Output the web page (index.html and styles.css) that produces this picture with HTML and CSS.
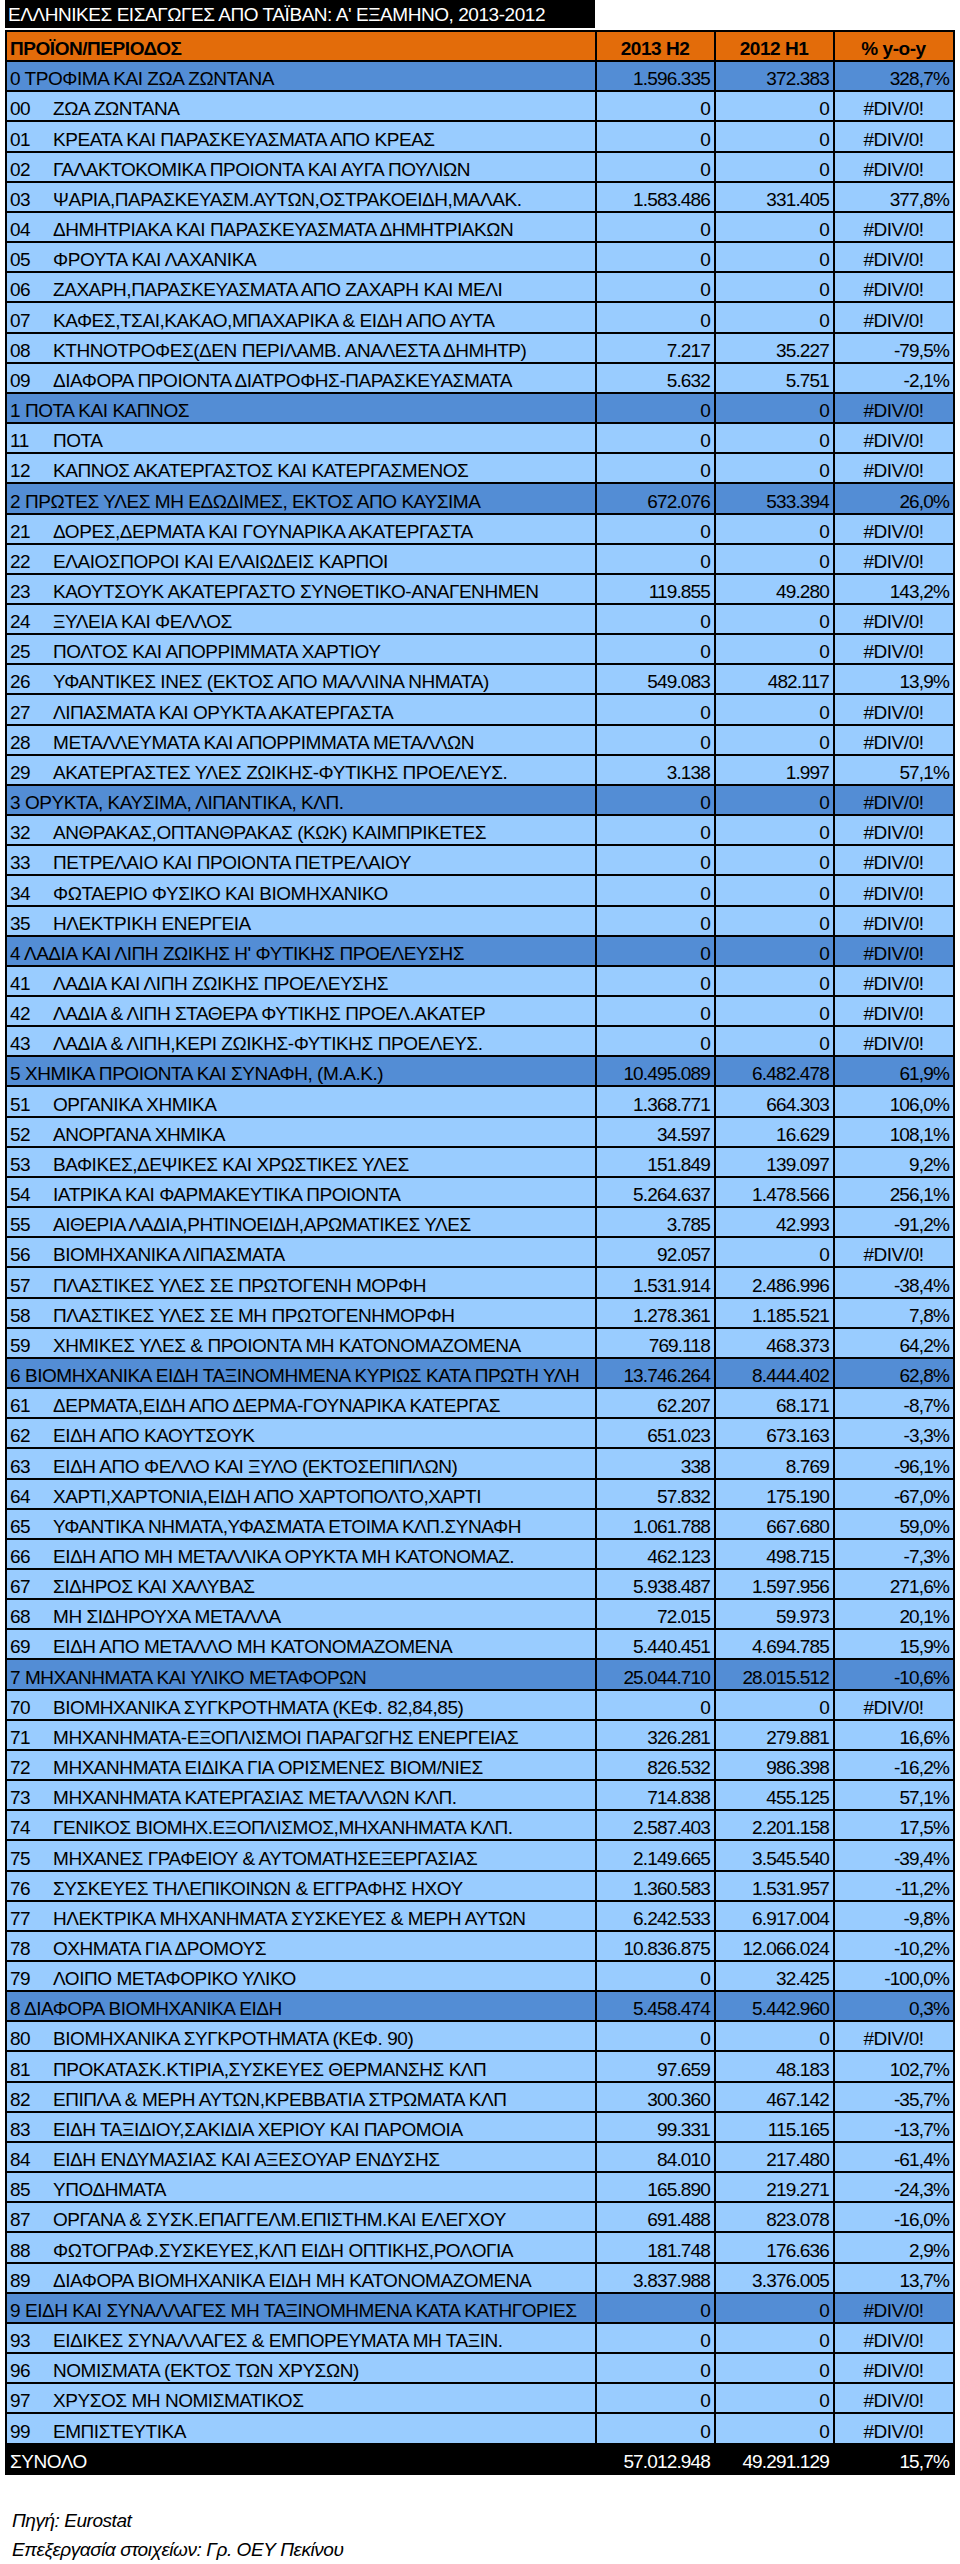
FILE: index.html
```html
<!DOCTYPE html>
<html lang="el">
<head>
<meta charset="utf-8">
<title>ΕΛΛΗΝΙΚΕΣ ΕΙΣΑΓΩΓΕΣ ΑΠΟ ΤΑΪΒΑΝ</title>
<link rel="stylesheet" href="styles.css">
</head>
<body>
<div class="page">
  <div class="title">ΕΛΛΗΝΙΚΕΣ ΕΙΣΑΓΩΓΕΣ ΑΠΟ ΤΑΪΒΑΝ: Α' ΕΞΑΜΗΝΟ, 2013-2012</div>
  <table class="data">
    <colgroup><col class="c-name"><col class="c-num"><col class="c-num"><col class="c-pct"></colgroup>
    <tr class="head"><th class="name">ΠΡΟΪΟΝ/ΠΕΡΙΟΔΟΣ</th><th>2013 H2</th><th>2012 H1</th><th>% y-o-y</th></tr>
    <tr class="cat"><td class="name">0 ΤΡΟΦΙΜΑ ΚΑΙ ΖΩΑ ΖΩΝΤΑΝΑ</td><td class="num">1.596.335</td><td class="num">372.383</td><td class="num">328,7%</td></tr>
    <tr class="sub"><td class="name"><span class="code">00</span>ΖΩΑ ΖΩΝΤΑΝΑ</td><td class="num">0</td><td class="num">0</td><td class="err">#DIV/0!</td></tr>
    <tr class="sub"><td class="name"><span class="code">01</span>ΚΡΕΑΤΑ ΚΑΙ ΠΑΡΑΣΚΕΥΑΣΜΑΤΑ ΑΠΟ ΚΡΕΑΣ</td><td class="num">0</td><td class="num">0</td><td class="err">#DIV/0!</td></tr>
    <tr class="sub"><td class="name"><span class="code">02</span>ΓΑΛΑΚΤΟΚΟΜΙΚΑ ΠΡΟΙΟΝΤΑ ΚΑΙ ΑΥΓΑ ΠΟΥΛΙΩΝ</td><td class="num">0</td><td class="num">0</td><td class="err">#DIV/0!</td></tr>
    <tr class="sub"><td class="name"><span class="code">03</span>ΨΑΡΙΑ,ΠΑΡΑΣΚΕΥΑΣΜ.ΑΥΤΩΝ,ΟΣΤΡΑΚΟΕΙΔΗ,ΜΑΛΑΚ.</td><td class="num">1.583.486</td><td class="num">331.405</td><td class="num">377,8%</td></tr>
    <tr class="sub"><td class="name"><span class="code">04</span>ΔΗΜΗΤΡΙΑΚΑ ΚΑΙ ΠΑΡΑΣΚΕΥΑΣΜΑΤΑ ΔΗΜΗΤΡΙΑΚΩΝ</td><td class="num">0</td><td class="num">0</td><td class="err">#DIV/0!</td></tr>
    <tr class="sub"><td class="name"><span class="code">05</span>ΦΡΟΥΤΑ ΚΑΙ ΛΑΧΑΝΙΚΑ</td><td class="num">0</td><td class="num">0</td><td class="err">#DIV/0!</td></tr>
    <tr class="sub"><td class="name"><span class="code">06</span>ΖΑΧΑΡΗ,ΠΑΡΑΣΚΕΥΑΣΜΑΤΑ ΑΠΟ ΖΑΧΑΡΗ ΚΑΙ ΜΕΛΙ</td><td class="num">0</td><td class="num">0</td><td class="err">#DIV/0!</td></tr>
    <tr class="sub"><td class="name"><span class="code">07</span>ΚΑΦΕΣ,ΤΣΑΙ,ΚΑΚΑΟ,ΜΠΑΧΑΡΙΚΑ &amp; ΕΙΔΗ ΑΠΟ ΑΥΤΑ</td><td class="num">0</td><td class="num">0</td><td class="err">#DIV/0!</td></tr>
    <tr class="sub"><td class="name"><span class="code">08</span>ΚΤΗΝΟΤΡΟΦΕΣ(ΔΕΝ ΠΕΡΙΛΑΜΒ. ΑΝΑΛΕΣΤΑ ΔΗΜΗΤΡ)</td><td class="num">7.217</td><td class="num">35.227</td><td class="num">-79,5%</td></tr>
    <tr class="sub"><td class="name"><span class="code">09</span>ΔΙΑΦΟΡΑ ΠΡΟΙΟΝΤΑ ΔΙΑΤΡΟΦΗΣ-ΠΑΡΑΣΚΕΥΑΣΜΑΤΑ</td><td class="num">5.632</td><td class="num">5.751</td><td class="num">-2,1%</td></tr>
    <tr class="cat"><td class="name">1 ΠΟΤΑ ΚΑΙ ΚΑΠΝΟΣ</td><td class="num">0</td><td class="num">0</td><td class="err">#DIV/0!</td></tr>
    <tr class="sub"><td class="name"><span class="code">11</span>ΠΟΤΑ</td><td class="num">0</td><td class="num">0</td><td class="err">#DIV/0!</td></tr>
    <tr class="sub"><td class="name"><span class="code">12</span>ΚΑΠΝΟΣ ΑΚΑΤΕΡΓΑΣΤΟΣ ΚΑΙ ΚΑΤΕΡΓΑΣΜΕΝΟΣ</td><td class="num">0</td><td class="num">0</td><td class="err">#DIV/0!</td></tr>
    <tr class="cat"><td class="name">2 ΠΡΩΤΕΣ ΥΛΕΣ ΜΗ ΕΔΩΔΙΜΕΣ, ΕΚΤΟΣ ΑΠΟ ΚΑΥΣΙΜΑ</td><td class="num">672.076</td><td class="num">533.394</td><td class="num">26,0%</td></tr>
    <tr class="sub"><td class="name"><span class="code">21</span>ΔΟΡΕΣ,ΔΕΡΜΑΤΑ ΚΑΙ ΓΟΥΝΑΡΙΚΑ ΑΚΑΤΕΡΓΑΣΤΑ</td><td class="num">0</td><td class="num">0</td><td class="err">#DIV/0!</td></tr>
    <tr class="sub"><td class="name"><span class="code">22</span>ΕΛΑΙΟΣΠΟΡΟΙ ΚΑΙ ΕΛΑΙΩΔΕΙΣ ΚΑΡΠΟΙ</td><td class="num">0</td><td class="num">0</td><td class="err">#DIV/0!</td></tr>
    <tr class="sub"><td class="name"><span class="code">23</span>ΚΑΟΥΤΣΟΥΚ ΑΚΑΤΕΡΓΑΣΤΟ ΣΥΝΘΕΤΙΚΟ-ΑΝΑΓΕΝΗΜΕΝ</td><td class="num">119.855</td><td class="num">49.280</td><td class="num">143,2%</td></tr>
    <tr class="sub"><td class="name"><span class="code">24</span>ΞΥΛΕΙΑ ΚΑΙ ΦΕΛΛΟΣ</td><td class="num">0</td><td class="num">0</td><td class="err">#DIV/0!</td></tr>
    <tr class="sub"><td class="name"><span class="code">25</span>ΠΟΛΤΟΣ ΚΑΙ ΑΠΟΡΡΙΜΜΑΤΑ ΧΑΡΤΙΟΥ</td><td class="num">0</td><td class="num">0</td><td class="err">#DIV/0!</td></tr>
    <tr class="sub"><td class="name"><span class="code">26</span>ΥΦΑΝΤΙΚΕΣ ΙΝΕΣ (ΕΚΤΟΣ ΑΠΟ ΜΑΛΛΙΝΑ ΝΗΜΑΤΑ)</td><td class="num">549.083</td><td class="num">482.117</td><td class="num">13,9%</td></tr>
    <tr class="sub"><td class="name"><span class="code">27</span>ΛΙΠΑΣΜΑΤΑ ΚΑΙ ΟΡΥΚΤΑ ΑΚΑΤΕΡΓΑΣΤΑ</td><td class="num">0</td><td class="num">0</td><td class="err">#DIV/0!</td></tr>
    <tr class="sub"><td class="name"><span class="code">28</span>ΜΕΤΑΛΛΕΥΜΑΤΑ ΚΑΙ ΑΠΟΡΡΙΜΜΑΤΑ ΜΕΤΑΛΛΩΝ</td><td class="num">0</td><td class="num">0</td><td class="err">#DIV/0!</td></tr>
    <tr class="sub"><td class="name"><span class="code">29</span>ΑΚΑΤΕΡΓΑΣΤΕΣ ΥΛΕΣ ΖΩΙΚΗΣ-ΦΥΤΙΚΗΣ ΠΡΟΕΛΕΥΣ.</td><td class="num">3.138</td><td class="num">1.997</td><td class="num">57,1%</td></tr>
    <tr class="cat"><td class="name">3 ΟΡΥΚΤΑ, ΚΑΥΣΙΜΑ, ΛΙΠΑΝΤΙΚΑ, ΚΛΠ.</td><td class="num">0</td><td class="num">0</td><td class="err">#DIV/0!</td></tr>
    <tr class="sub"><td class="name"><span class="code">32</span>ΑΝΘΡΑΚΑΣ,ΟΠΤΑΝΘΡΑΚΑΣ (ΚΩΚ) ΚΑΙΜΠΡΙΚΕΤΕΣ</td><td class="num">0</td><td class="num">0</td><td class="err">#DIV/0!</td></tr>
    <tr class="sub"><td class="name"><span class="code">33</span>ΠΕΤΡΕΛΑΙΟ ΚΑΙ ΠΡΟΙΟΝΤΑ ΠΕΤΡΕΛΑΙΟΥ</td><td class="num">0</td><td class="num">0</td><td class="err">#DIV/0!</td></tr>
    <tr class="sub"><td class="name"><span class="code">34</span>ΦΩΤΑΕΡΙΟ ΦΥΣΙΚΟ ΚΑΙ ΒΙΟΜΗΧΑΝΙΚΟ</td><td class="num">0</td><td class="num">0</td><td class="err">#DIV/0!</td></tr>
    <tr class="sub"><td class="name"><span class="code">35</span>ΗΛΕΚΤΡΙΚΗ ΕΝΕΡΓΕΙΑ</td><td class="num">0</td><td class="num">0</td><td class="err">#DIV/0!</td></tr>
    <tr class="cat"><td class="name">4 ΛΑΔΙΑ ΚΑΙ ΛΙΠΗ ΖΩΙΚΗΣ Η' ΦΥΤΙΚΗΣ ΠΡΟΕΛΕΥΣΗΣ</td><td class="num">0</td><td class="num">0</td><td class="err">#DIV/0!</td></tr>
    <tr class="sub"><td class="name"><span class="code">41</span>ΛΑΔΙΑ ΚΑΙ ΛΙΠΗ ΖΩΙΚΗΣ ΠΡΟΕΛΕΥΣΗΣ</td><td class="num">0</td><td class="num">0</td><td class="err">#DIV/0!</td></tr>
    <tr class="sub"><td class="name"><span class="code">42</span>ΛΑΔΙΑ &amp; ΛΙΠΗ ΣΤΑΘΕΡΑ ΦΥΤΙΚΗΣ ΠΡΟΕΛ.ΑΚΑΤΕΡ</td><td class="num">0</td><td class="num">0</td><td class="err">#DIV/0!</td></tr>
    <tr class="sub"><td class="name"><span class="code">43</span>ΛΑΔΙΑ &amp; ΛΙΠΗ,ΚΕΡΙ ΖΩΙΚΗΣ-ΦΥΤΙΚΗΣ ΠΡΟΕΛΕΥΣ.</td><td class="num">0</td><td class="num">0</td><td class="err">#DIV/0!</td></tr>
    <tr class="cat"><td class="name">5 ΧΗΜΙΚΑ ΠΡΟΙΟΝΤΑ ΚΑΙ ΣΥΝΑΦΗ, (Μ.Α.Κ.)</td><td class="num">10.495.089</td><td class="num">6.482.478</td><td class="num">61,9%</td></tr>
    <tr class="sub"><td class="name"><span class="code">51</span>ΟΡΓΑΝΙΚΑ ΧΗΜΙΚΑ</td><td class="num">1.368.771</td><td class="num">664.303</td><td class="num">106,0%</td></tr>
    <tr class="sub"><td class="name"><span class="code">52</span>ΑΝΟΡΓΑΝΑ ΧΗΜΙΚΑ</td><td class="num">34.597</td><td class="num">16.629</td><td class="num">108,1%</td></tr>
    <tr class="sub"><td class="name"><span class="code">53</span>ΒΑΦΙΚΕΣ,ΔΕΨΙΚΕΣ ΚΑΙ ΧΡΩΣΤΙΚΕΣ ΥΛΕΣ</td><td class="num">151.849</td><td class="num">139.097</td><td class="num">9,2%</td></tr>
    <tr class="sub"><td class="name"><span class="code">54</span>ΙΑΤΡΙΚΑ ΚΑΙ ΦΑΡΜΑΚΕΥΤΙΚΑ ΠΡΟΙΟΝΤΑ</td><td class="num">5.264.637</td><td class="num">1.478.566</td><td class="num">256,1%</td></tr>
    <tr class="sub"><td class="name"><span class="code">55</span>ΑΙΘΕΡΙΑ ΛΑΔΙΑ,ΡΗΤΙΝΟΕΙΔΗ,ΑΡΩΜΑΤΙΚΕΣ ΥΛΕΣ</td><td class="num">3.785</td><td class="num">42.993</td><td class="num">-91,2%</td></tr>
    <tr class="sub"><td class="name"><span class="code">56</span>ΒΙΟΜΗΧΑΝΙΚΑ ΛΙΠΑΣΜΑΤΑ</td><td class="num">92.057</td><td class="num">0</td><td class="err">#DIV/0!</td></tr>
    <tr class="sub"><td class="name"><span class="code">57</span>ΠΛΑΣΤΙΚΕΣ ΥΛΕΣ ΣΕ ΠΡΩΤΟΓΕΝΗ ΜΟΡΦΗ</td><td class="num">1.531.914</td><td class="num">2.486.996</td><td class="num">-38,4%</td></tr>
    <tr class="sub"><td class="name"><span class="code">58</span>ΠΛΑΣΤΙΚΕΣ ΥΛΕΣ ΣΕ ΜΗ ΠΡΩΤΟΓΕΝΗΜΟΡΦΗ</td><td class="num">1.278.361</td><td class="num">1.185.521</td><td class="num">7,8%</td></tr>
    <tr class="sub"><td class="name"><span class="code">59</span>ΧΗΜΙΚΕΣ ΥΛΕΣ &amp; ΠΡΟΙΟΝΤΑ ΜΗ ΚΑΤΟΝΟΜΑΖΟΜΕΝΑ</td><td class="num">769.118</td><td class="num">468.373</td><td class="num">64,2%</td></tr>
    <tr class="cat"><td class="name">6 ΒΙΟΜΗΧΑΝΙΚΑ ΕΙΔΗ ΤΑΞΙΝΟΜΗΜΕΝΑ ΚΥΡΙΩΣ ΚΑΤΑ ΠΡΩΤΗ ΥΛΗ</td><td class="num">13.746.264</td><td class="num">8.444.402</td><td class="num">62,8%</td></tr>
    <tr class="sub"><td class="name"><span class="code">61</span>ΔΕΡΜΑΤΑ,ΕΙΔΗ ΑΠΟ ΔΕΡΜΑ-ΓΟΥΝΑΡΙΚΑ ΚΑΤΕΡΓΑΣ</td><td class="num">62.207</td><td class="num">68.171</td><td class="num">-8,7%</td></tr>
    <tr class="sub"><td class="name"><span class="code">62</span>ΕΙΔΗ ΑΠΟ ΚΑΟΥΤΣΟΥΚ</td><td class="num">651.023</td><td class="num">673.163</td><td class="num">-3,3%</td></tr>
    <tr class="sub"><td class="name"><span class="code">63</span>ΕΙΔΗ ΑΠΟ ΦΕΛΛΟ ΚΑΙ ΞΥΛΟ (ΕΚΤΟΣΕΠΙΠΛΩΝ)</td><td class="num">338</td><td class="num">8.769</td><td class="num">-96,1%</td></tr>
    <tr class="sub"><td class="name"><span class="code">64</span>ΧΑΡΤΙ,ΧΑΡΤΟΝΙΑ,ΕΙΔΗ ΑΠΟ ΧΑΡΤΟΠΟΛΤΟ,ΧΑΡΤΙ</td><td class="num">57.832</td><td class="num">175.190</td><td class="num">-67,0%</td></tr>
    <tr class="sub"><td class="name"><span class="code">65</span>ΥΦΑΝΤΙΚΑ ΝΗΜΑΤΑ,ΥΦΑΣΜΑΤΑ ΕΤΟΙΜΑ ΚΛΠ.ΣΥΝΑΦΗ</td><td class="num">1.061.788</td><td class="num">667.680</td><td class="num">59,0%</td></tr>
    <tr class="sub"><td class="name"><span class="code">66</span>ΕΙΔΗ ΑΠΟ ΜΗ ΜΕΤΑΛΛΙΚΑ ΟΡΥΚΤΑ ΜΗ ΚΑΤΟΝΟΜΑΖ.</td><td class="num">462.123</td><td class="num">498.715</td><td class="num">-7,3%</td></tr>
    <tr class="sub"><td class="name"><span class="code">67</span>ΣΙΔΗΡΟΣ ΚΑΙ ΧΑΛΥΒΑΣ</td><td class="num">5.938.487</td><td class="num">1.597.956</td><td class="num">271,6%</td></tr>
    <tr class="sub"><td class="name"><span class="code">68</span>ΜΗ ΣΙΔΗΡΟΥΧΑ ΜΕΤΑΛΛΑ</td><td class="num">72.015</td><td class="num">59.973</td><td class="num">20,1%</td></tr>
    <tr class="sub"><td class="name"><span class="code">69</span>ΕΙΔΗ ΑΠΟ ΜΕΤΑΛΛΟ ΜΗ ΚΑΤΟΝΟΜΑΖΟΜΕΝΑ</td><td class="num">5.440.451</td><td class="num">4.694.785</td><td class="num">15,9%</td></tr>
    <tr class="cat"><td class="name">7 ΜΗΧΑΝΗΜΑΤΑ ΚΑΙ ΥΛΙΚΟ ΜΕΤΑΦΟΡΩΝ</td><td class="num">25.044.710</td><td class="num">28.015.512</td><td class="num">-10,6%</td></tr>
    <tr class="sub"><td class="name"><span class="code">70</span>ΒΙΟΜΗΧΑΝΙΚΑ ΣΥΓΚΡΟΤΗΜΑΤΑ (ΚΕΦ. 82,84,85)</td><td class="num">0</td><td class="num">0</td><td class="err">#DIV/0!</td></tr>
    <tr class="sub"><td class="name"><span class="code">71</span>ΜΗΧΑΝΗΜΑΤΑ-ΕΞΟΠΛΙΣΜΟΙ ΠΑΡΑΓΩΓΗΣ ΕΝΕΡΓΕΙΑΣ</td><td class="num">326.281</td><td class="num">279.881</td><td class="num">16,6%</td></tr>
    <tr class="sub"><td class="name"><span class="code">72</span>ΜΗΧΑΝΗΜΑΤΑ ΕΙΔΙΚΑ ΓΙΑ ΟΡΙΣΜΕΝΕΣ ΒΙΟΜ/ΝΙΕΣ</td><td class="num">826.532</td><td class="num">986.398</td><td class="num">-16,2%</td></tr>
    <tr class="sub"><td class="name"><span class="code">73</span>ΜΗΧΑΝΗΜΑΤΑ ΚΑΤΕΡΓΑΣΙΑΣ ΜΕΤΑΛΛΩΝ ΚΛΠ.</td><td class="num">714.838</td><td class="num">455.125</td><td class="num">57,1%</td></tr>
    <tr class="sub"><td class="name"><span class="code">74</span>ΓΕΝΙΚΟΣ ΒΙΟΜΗΧ.ΕΞΟΠΛΙΣΜΟΣ,ΜΗΧΑΝΗΜΑΤΑ ΚΛΠ.</td><td class="num">2.587.403</td><td class="num">2.201.158</td><td class="num">17,5%</td></tr>
    <tr class="sub"><td class="name"><span class="code">75</span>ΜΗΧΑΝΕΣ ΓΡΑΦΕΙΟΥ &amp; ΑΥΤΟΜΑΤΗΣΕΞΕΡΓΑΣΙΑΣ</td><td class="num">2.149.665</td><td class="num">3.545.540</td><td class="num">-39,4%</td></tr>
    <tr class="sub"><td class="name"><span class="code">76</span>ΣΥΣΚΕΥΕΣ ΤΗΛΕΠΙΚΟΙΝΩΝ &amp; ΕΓΓΡΑΦΗΣ ΗΧΟΥ</td><td class="num">1.360.583</td><td class="num">1.531.957</td><td class="num">-11,2%</td></tr>
    <tr class="sub"><td class="name"><span class="code">77</span>ΗΛΕΚΤΡΙΚΑ ΜΗΧΑΝΗΜΑΤΑ ΣΥΣΚΕΥΕΣ &amp; ΜΕΡΗ ΑΥΤΩΝ</td><td class="num">6.242.533</td><td class="num">6.917.004</td><td class="num">-9,8%</td></tr>
    <tr class="sub"><td class="name"><span class="code">78</span>ΟΧΗΜΑΤΑ ΓΙΑ ΔΡΟΜΟΥΣ</td><td class="num">10.836.875</td><td class="num">12.066.024</td><td class="num">-10,2%</td></tr>
    <tr class="sub"><td class="name"><span class="code">79</span>ΛΟΙΠΟ ΜΕΤΑΦΟΡΙΚΟ ΥΛΙΚΟ</td><td class="num">0</td><td class="num">32.425</td><td class="num">-100,0%</td></tr>
    <tr class="cat"><td class="name">8 ΔΙΑΦΟΡΑ ΒΙΟΜΗΧΑΝΙΚΑ ΕΙΔΗ</td><td class="num">5.458.474</td><td class="num">5.442.960</td><td class="num">0,3%</td></tr>
    <tr class="sub"><td class="name"><span class="code">80</span>ΒΙΟΜΗΧΑΝΙΚΑ ΣΥΓΚΡΟΤΗΜΑΤΑ (ΚΕΦ. 90)</td><td class="num">0</td><td class="num">0</td><td class="err">#DIV/0!</td></tr>
    <tr class="sub"><td class="name"><span class="code">81</span>ΠΡΟΚΑΤΑΣΚ.ΚΤΙΡΙΑ,ΣΥΣΚΕΥΕΣ ΘΕΡΜΑΝΣΗΣ ΚΛΠ</td><td class="num">97.659</td><td class="num">48.183</td><td class="num">102,7%</td></tr>
    <tr class="sub"><td class="name"><span class="code">82</span>ΕΠΙΠΛΑ &amp; ΜΕΡΗ ΑΥΤΩΝ,ΚΡΕΒΒΑΤΙΑ ΣΤΡΩΜΑΤΑ ΚΛΠ</td><td class="num">300.360</td><td class="num">467.142</td><td class="num">-35,7%</td></tr>
    <tr class="sub"><td class="name"><span class="code">83</span>ΕΙΔΗ ΤΑΞΙΔΙΟΥ,ΣΑΚΙΔΙΑ ΧΕΡΙΟΥ ΚΑΙ ΠΑΡΟΜΟΙΑ</td><td class="num">99.331</td><td class="num">115.165</td><td class="num">-13,7%</td></tr>
    <tr class="sub"><td class="name"><span class="code">84</span>ΕΙΔΗ ΕΝΔΥΜΑΣΙΑΣ ΚΑΙ ΑΞΕΣΟΥΑΡ ΕΝΔΥΣΗΣ</td><td class="num">84.010</td><td class="num">217.480</td><td class="num">-61,4%</td></tr>
    <tr class="sub"><td class="name"><span class="code">85</span>ΥΠΟΔΗΜΑΤΑ</td><td class="num">165.890</td><td class="num">219.271</td><td class="num">-24,3%</td></tr>
    <tr class="sub"><td class="name"><span class="code">87</span>ΟΡΓΑΝΑ &amp; ΣΥΣΚ.ΕΠΑΓΓΕΛΜ.ΕΠΙΣΤΗΜ.ΚΑΙ ΕΛΕΓΧΟΥ</td><td class="num">691.488</td><td class="num">823.078</td><td class="num">-16,0%</td></tr>
    <tr class="sub"><td class="name"><span class="code">88</span>ΦΩΤΟΓΡΑΦ.ΣΥΣΚΕΥΕΣ,ΚΛΠ ΕΙΔΗ ΟΠΤΙΚΗΣ,ΡΟΛΟΓΙΑ</td><td class="num">181.748</td><td class="num">176.636</td><td class="num">2,9%</td></tr>
    <tr class="sub"><td class="name"><span class="code">89</span>ΔΙΑΦΟΡΑ ΒΙΟΜΗΧΑΝΙΚΑ ΕΙΔΗ ΜΗ ΚΑΤΟΝΟΜΑΖΟΜΕΝΑ</td><td class="num">3.837.988</td><td class="num">3.376.005</td><td class="num">13,7%</td></tr>
    <tr class="cat"><td class="name">9 ΕΙΔΗ ΚΑΙ ΣΥΝΑΛΛΑΓΕΣ ΜΗ ΤΑΞΙΝΟΜΗΜΕΝΑ ΚΑΤΑ ΚΑΤΗΓΟΡΙΕΣ</td><td class="num">0</td><td class="num">0</td><td class="err">#DIV/0!</td></tr>
    <tr class="sub"><td class="name"><span class="code">93</span>ΕΙΔΙΚΕΣ ΣΥΝΑΛΛΑΓΕΣ &amp; ΕΜΠΟΡΕΥΜΑΤΑ ΜΗ ΤΑΞΙΝ.</td><td class="num">0</td><td class="num">0</td><td class="err">#DIV/0!</td></tr>
    <tr class="sub"><td class="name"><span class="code">96</span>ΝΟΜΙΣΜΑΤΑ (ΕΚΤΟΣ ΤΩΝ ΧΡΥΣΩΝ)</td><td class="num">0</td><td class="num">0</td><td class="err">#DIV/0!</td></tr>
    <tr class="sub"><td class="name"><span class="code">97</span>ΧΡΥΣΟΣ ΜΗ ΝΟΜΙΣΜΑΤΙΚΟΣ</td><td class="num">0</td><td class="num">0</td><td class="err">#DIV/0!</td></tr>
    <tr class="sub"><td class="name"><span class="code">99</span>ΕΜΠΙΣΤΕΥΤΙΚΑ</td><td class="num">0</td><td class="num">0</td><td class="err">#DIV/0!</td></tr>
    <tr class="total"><td class="name">ΣΥΝΟΛΟ</td><td class="num">57.012.948</td><td class="num">49.291.129</td><td class="num">15,7%</td></tr>
  </table>
  <div class="notes">
    <p>Πηγή: Eurostat</p>
    <p>Επεξεργασία στοιχείων: Γρ. ΟΕΥ Πεκίνου</p>
  </div>
</div>
</body>
</html>
```

FILE: styles.css
```css
html, body {
  margin: 0;
  padding: 0;
  background: #ffffff;
}

.page {
  padding: 0 0 0 5px;
  font-family: "Liberation Sans", Arial, sans-serif;
  font-size: 19px;
  letter-spacing: -0.45px;
  color: #000000;
}

.title {
  width: 587px;
  height: 28px;
  padding-left: 3px;
  background: #000000;
  color: #ffffff;
  line-height: 29px;
  white-space: nowrap;
}

.data {
  margin-top: 2px;
  width: 949px;
  border-collapse: collapse;
  table-layout: fixed;
  border: 2px solid #000000;
}

.c-name { width: 590px; }
.c-num { width: 119px; }
.c-pct { width: 120px; }

.data tr {
  height: 30.17px;
}

.data th,
.data td {
  border: 2px solid #000000;
  padding: 0 4px 0 3px;
  line-height: 23px;
  vertical-align: bottom;
  white-space: nowrap;
  overflow: hidden;
}

.data th {
  font-weight: bold;
  text-align: center;
}

.data th.name {
  text-align: left;
}

.head {
  background: #e36c0a;
}

.cat {
  background: #538dd5;
}

.sub {
  background: #99ccff;
}

.total {
  background: #000000;
  color: #ffffff;
}

.num {
  text-align: right;
  letter-spacing: -0.85px;
}

.err {
  text-align: center;
}

.code {
  display: inline-block;
  width: 43px;
}

.notes {
  margin-top: 31px;
  padding-left: 7px;
  font-style: italic;
}

.notes p {
  margin: 0;
  line-height: 29px;
}
```
